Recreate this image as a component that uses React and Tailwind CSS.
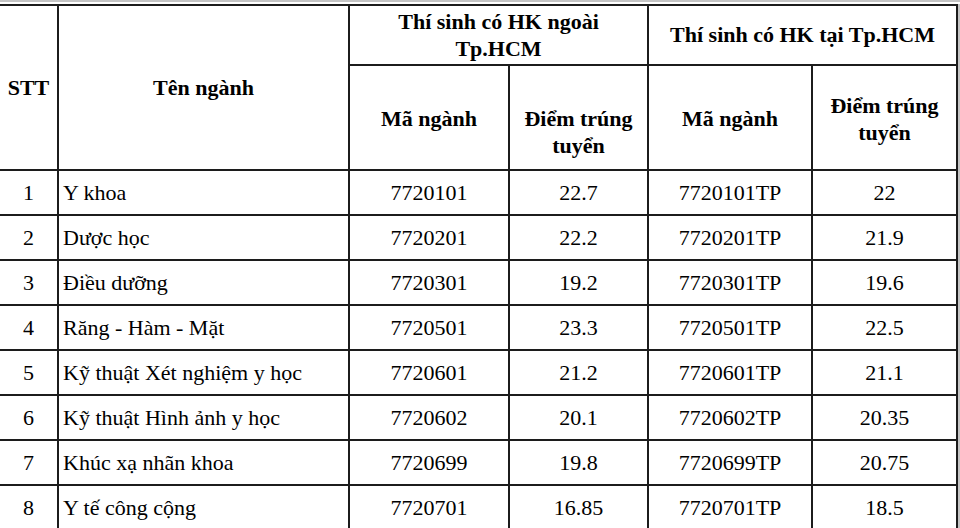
const rows = [
    { stt: 1, name: "Y khoa", ma1: "7720101", d1: "22.7", ma2: "7720101TP", d2: "22" },
    { stt: 2, name: "Dược học", ma1: "7720201", d1: "22.2", ma2: "7720201TP", d2: "21.9" },
    { stt: 3, name: "Điều dưỡng", ma1: "7720301", d1: "19.2", ma2: "7720301TP", d2: "19.6" },
    { stt: 4, name: "Răng - Hàm - Mặt", ma1: "7720501", d1: "23.3", ma2: "7720501TP", d2: "22.5" },
    { stt: 5, name: "Kỹ thuật Xét nghiệm y học", ma1: "7720601", d1: "21.2", ma2: "7720601TP", d2: "21.1" },
    { stt: 6, name: "Kỹ thuật Hình ảnh y học", ma1: "7720602", d1: "20.1", ma2: "7720602TP", d2: "20.35" },
    { stt: 7, name: "Khúc xạ nhãn khoa", ma1: "7720699", d1: "19.8", ma2: "7720699TP", d2: "20.75" },
    { stt: 8, name: "Y tế công cộng", ma1: "7720701", d1: "16.85", ma2: "7720701TP", d2: "18.5" },
];

const Cell = ({ className = "", children }) => (
    <div className={`bg-white flex items-center justify-center text-center ${className}`}>
        {children}
    </div>
);

export default function App() {
    return (
        <div
            className="w-[960px] h-[528px] overflow-hidden bg-white text-black text-[22px] leading-[27px]"
            style={{ fontFamily: '"Liberation Serif", "Times New Roman", serif' }}
        >
            <div className="h-[2px] bg-[#c4c4c4]" />
            <div className="h-[2px] bg-white" />
            <div className="flex">
                <div className="bg-[#1c1c1c] pt-[2px] pr-[2px]">
                    <div className="grid grid-cols-[57px_289px_158px_137px_162px_143px] grid-rows-[58px_103px_repeat(8,43px)] gap-[2px]">
                        {/* header */}
                        <Cell className="row-span-2 font-bold pb-[1px]">STT</Cell>
                        <Cell className="row-span-2 font-bold pb-[1px]">Tên ngành</Cell>
                        <Cell className="col-span-2 font-bold">
                            Thí sinh có HK ngoài
                            <br />
                            Tp.HCM
                        </Cell>
                        <Cell className="col-span-2 font-bold pb-[2px]">Thí sinh có HK tại Tp.HCM</Cell>
                        <Cell className="font-bold pt-[2px]">Mã ngành</Cell>
                        <Cell className="font-bold pt-[28px]">
                            Điểm trúng
                            <br />
                            tuyển
                        </Cell>
                        <Cell className="font-bold pt-[2px]">Mã ngành</Cell>
                        <Cell className="font-bold pt-[2px]">
                            Điểm trúng
                            <br />
                            tuyển
                        </Cell>

                        {/* data */}
                        {rows.map((r) => (
                            <div key={r.stt} className="contents">
                                <Cell>{r.stt}</Cell>
                                <div className="bg-white flex items-center pl-[4px] whitespace-nowrap">{r.name}</div>
                                <Cell>{r.ma1}</Cell>
                                <Cell>{r.d1}</Cell>
                                <Cell>{r.ma2}</Cell>
                                <Cell>{r.d2}</Cell>
                            </div>
                        ))}
                    </div>
                </div>
                <div className="w-[2px] bg-[#c4c4c4]" />
            </div>
        </div>
    );
}
